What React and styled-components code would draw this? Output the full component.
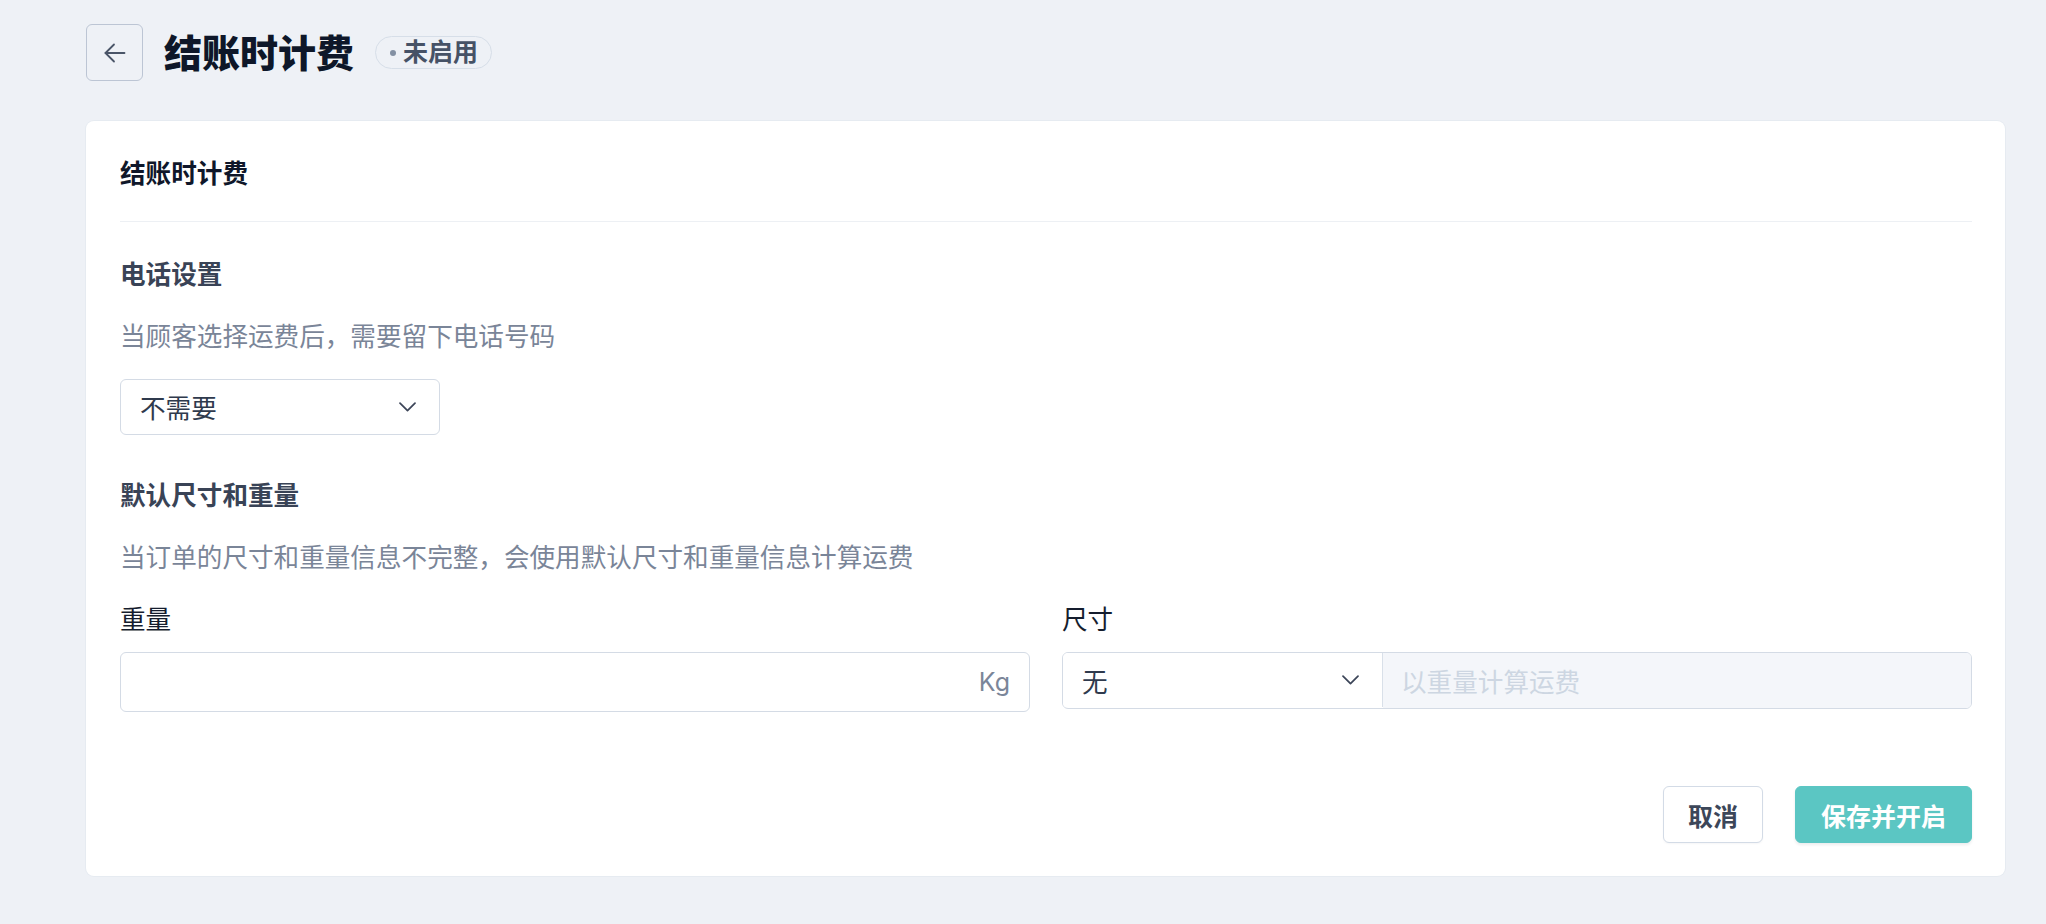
import styled, { createGlobalStyle } from "styled-components";

const GlobalStyle = createGlobalStyle`
    body {
        margin: 0;
        background: #eef1f6;
        font-family: Inter, "Noto Sans CJK SC", sans-serif;
        color: #111a2c;
    }
`;

const Page = styled.div`
    padding: 24px 41px 40px 86px;
    font-family: Inter, "Noto Sans CJK SC", sans-serif;
`;

const Header = styled.header`
    display: flex;
    align-items: center;
    gap: 21px;
    height: 57px;
`;

const BackButton = styled.button`
    width: 57px;
    height: 57px;
    display: flex;
    align-items: center;
    justify-content: center;
    padding: 0;
    background: transparent;
    border: 1.5px solid #bcc5d4;
    border-radius: 6px;
    color: #4a5568;
    cursor: pointer;
`;

const PageTitle = styled.h1`
    margin: 0;
    font-size: 38px;
    font-weight: 800;
    line-height: 1;
    color: #0e1729;
`;

const Badge = styled.span`
    display: inline-flex;
    align-items: center;
    gap: 7px;
    height: 33px;
    box-sizing: border-box;
    padding: 0 13px 0 14px;
    border: 1.5px solid #d6dee8;
    border-radius: 999px;
    font-size: 25px;
    font-weight: 700;
    color: #465266;
    line-height: 1;
`;

const Dot = styled.span`
    width: 6px;
    height: 6px;
    border-radius: 50%;
    background: #8390a3;
`;

const Card = styled.section`
    margin-top: 40px;
    background: #fff;
    border-radius: 8px;
    box-shadow: 0 0 0 1px #e6ebf1;
`;

const CardHeader = styled.div`
    margin: 0 33px 0 34px;
    height: 100px;
    display: flex;
    align-items: center;
    border-bottom: 1px solid #edf0f4;
    font-size: 25.6px;
    font-weight: 700;
    color: #0f172a;
`;

const CardBody = styled.div`
    padding: 34px 33px 33px 34px;
`;

const Section = styled.div`
    & + & {
        margin-top: 42px;
    }
`;

const SectionTitle = styled.h3`
    margin: 0 0 24px;
    font-size: 25.6px;
    line-height: 38.4px;
    font-weight: 600;
    color: #394356;
`;

const Desc = styled.p`
    margin: 0 0 ${(p) => p.$gap || 22}px;
    font-size: 25.6px;
    line-height: 38.4px;
    color: #7a8598;
`;

const Select = styled.div`
    width: 320px;
    height: ${(p) => p.$height || 56}px;
    box-sizing: border-box;
    display: flex;
    align-items: center;
    justify-content: space-between;
    padding: 0 23px 0 19px;
    border: ${(p) => (p.$inGroup ? "none" : "1.5px solid #d4dbe5")};
    border-right: ${(p) => (p.$inGroup ? "1.5px solid #d9e0e9" : "1.5px solid #d4dbe5")};
    border-radius: ${(p) => (p.$inGroup ? "0" : "6px")};
    background: #fff;
    font-size: 25.6px;
    color: #2f3a4d;
    flex-shrink: 0;
`;

const Fields = styled.div`
    display: grid;
    grid-template-columns: 1fr 1fr;
    gap: 32px;
    align-items: start;
`;

const Field = styled.div`
    display: flex;
    flex-direction: column;
`;

const Label = styled.label`
    font-size: 25.6px;
    line-height: 38.4px;
    color: #151d2e;
    margin-bottom: 13px;
`;

const WeightInput = styled.div`
    height: 60px;
    box-sizing: border-box;
    display: flex;
    align-items: center;
    justify-content: flex-end;
    padding-right: 19px;
    border: 1.5px solid #d4dbe5;
    border-radius: 6px;
    background: #fff;
`;

const Unit = styled.span`
    font-family: Inter, "Noto Sans", sans-serif;
    font-size: 25px;
    color: #7b8699;
`;

const SizeGroup = styled.div`
    height: 57px;
    box-sizing: border-box;
    display: flex;
    border: 1.5px solid #d4dbe5;
    border-radius: 6px;
    overflow: hidden;
`;

const DisabledInput = styled.div`
    flex: 1;
    display: flex;
    align-items: center;
    padding-left: 18px;
    background: #f4f6fa;
    font-size: 25.6px;
    color: #cdd6e2;
`;

const Footer = styled.div`
    margin-top: 74px;
    display: flex;
    justify-content: flex-end;
    gap: 32px;
`;

const Button = styled.button`
    height: 57px;
    padding: 0 ${(p) => (p.$primary ? 25 : 24)}px;
    border-radius: 6px;
    border: 1.5px solid ${(p) => (p.$primary ? "#5bc6c3" : "#d3dbe6")};
    background: ${(p) => (p.$primary ? "#5bc6c3" : "#fff")};
    color: ${(p) => (p.$primary ? "#fff" : "#3c4659")};
    box-shadow: ${(p) => (p.$primary ? "0 2px 3px rgba(15, 23, 42, 0.08)" : "0 1px 2px rgba(15, 23, 42, 0.04)")};
    font-family: Inter, "Noto Sans CJK SC", sans-serif;
    font-size: 25px;
    font-weight: 700;
    cursor: pointer;
`;

function ArrowLeft() {
    return (
        <svg width="24" height="24" viewBox="0 0 24 24" fill="none" stroke="currentColor" strokeWidth="1.8" strokeLinecap="round" strokeLinejoin="round">
            <path d="M21.5 12H2.5" />
            <path d="M11 3.5L2.5 12l8.5 8.5" />
        </svg>
    );
}

function Chevron() {
    return (
        <svg width="17" height="10" viewBox="0 0 17 10" fill="none" stroke="#3d4659" strokeWidth="1.7" strokeLinecap="round" strokeLinejoin="round">
            <path d="M1 1.2l7.5 7.5L16 1.2" />
        </svg>
    );
}

export default function App() {
    return (
        <>
            <GlobalStyle />
            <Page>
                <Header>
                    <BackButton aria-label="返回">
                        <ArrowLeft />
                    </BackButton>
                    <PageTitle>结账时计费</PageTitle>
                    <Badge>
                        <Dot />
                        未启用
                    </Badge>
                </Header>

                <Card>
                    <CardHeader>结账时计费</CardHeader>
                    <CardBody>
                        <Section>
                            <SectionTitle>电话设置</SectionTitle>
                            <Desc>当顾客选择运费后，需要留下电话号码</Desc>
                            <Select>
                                不需要
                                <Chevron />
                            </Select>
                        </Section>

                        <Section>
                            <SectionTitle>默认尺寸和重量</SectionTitle>
                            <Desc $gap={23}>当订单的尺寸和重量信息不完整，会使用默认尺寸和重量信息计算运费</Desc>
                            <Fields>
                                <Field>
                                    <Label>重量</Label>
                                    <WeightInput>
                                        <Unit>Kg</Unit>
                                    </WeightInput>
                                </Field>
                                <Field>
                                    <Label>尺寸</Label>
                                    <SizeGroup>
                                        <Select $inGroup $height={54}>
                                            无
                                            <Chevron />
                                        </Select>
                                        <DisabledInput>以重量计算运费</DisabledInput>
                                    </SizeGroup>
                                </Field>
                            </Fields>
                        </Section>

                        <Footer>
                            <Button>取消</Button>
                            <Button $primary>保存并开启</Button>
                        </Footer>
                    </CardBody>
                </Card>
            </Page>
        </>
    );
}
